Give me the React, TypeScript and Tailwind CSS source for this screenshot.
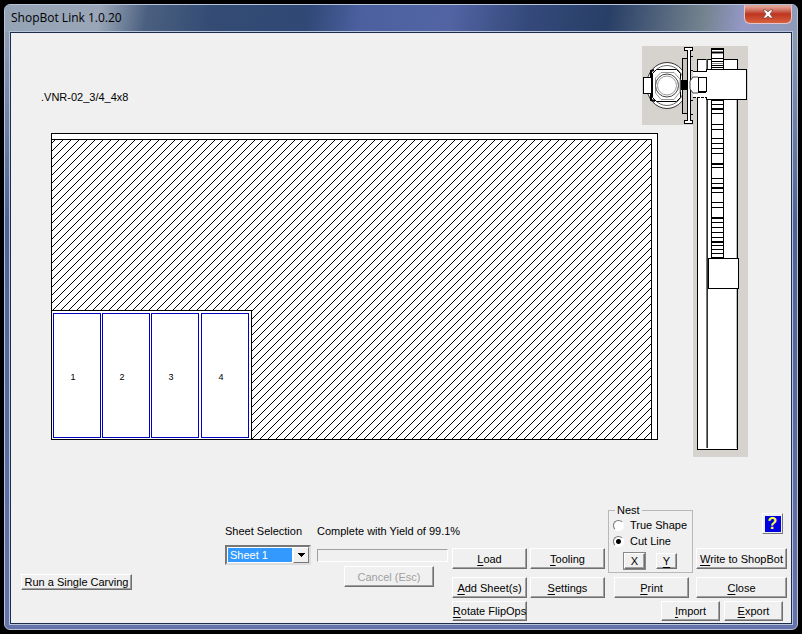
import React from "react";

type PushButtonProps = {
  label: string;
  hotkey?: string;
  className?: string;
  disabled?: boolean;
};

// Underlines the first occurrence of the hotkey letter
function PushButton({ label, hotkey, className = "", disabled }: PushButtonProps) {
  const at = hotkey ? label.indexOf(hotkey) : -1;

  return (
    <button
      disabled={disabled}
      className={`flex items-center justify-center whitespace-nowrap border border-t-white border-l-white border-r-[#6f6f6f] border-b-[#6f6f6f] bg-[#f0f0f0] shadow-[inset_-1px_-1px_0_#a0a0a0] disabled:text-[#a0a0a0] ${className}`}
    >
      {at < 0 ? (
        label
      ) : (
        <span>
          {label.slice(0, at)}
          <span className="underline underline-offset-2">{hotkey}</span>
          {label.slice(at + 1)}
        </span>
      )}
    </button>
  );
}

const parts = [
  { id: 1, x: 2 },
  { id: 2, x: 51 },
  { id: 3, x: 100 },
  { id: 4, x: 150 },
];

function SheetPreview() {
  return (
    <svg viewBox="0 0 607 307" className="block w-full" shapeRendering="crispEdges">
      <defs>
        <pattern id="waste" width="8" height="8" patternUnits="userSpaceOnUse">
          <rect width="8" height="8" fill="#fff" />
          {[0, 1, 2, 3, 4, 5, 6, 7].map((y) => (
            <rect key={y} x={(18 - y) % 8} y={y} width="1" height="1" fill="#000" />
          ))}
        </pattern>
      </defs>
      <rect x="0.5" y="0.5" width="606" height="306" fill="#fff" stroke="#000" />
      <rect x="0.5" y="6.5" width="600" height="300" fill="url(#waste)" stroke="#000" />
      <rect x="0.5" y="177.5" width="200" height="129" fill="#fff" stroke="#000" />
      {parts.map((part) => (
        <g key={part.id}>
          <rect x={part.x + 0.5} y="180.5" width="47" height="124" fill="#fff" stroke="#0000c0" />
          <text
            x={part.x + 20}
            y="247"
            textAnchor="middle"
            className="fill-black font-['Liberation_Sans'] text-[9px]"
          >
            {part.id}
          </text>
        </g>
      ))}
    </svg>
  );
}

// [y, thickness] of the rack teeth below the carriage
const teeth = [
  [54, 1], [58, 1], [62, 2], [67, 1], [78, 1], [83, 1], [92, 1], [97, 1], [102, 1], [107, 1],
  [117, 2], [121, 1], [132, 1], [137, 1], [141, 2], [146, 1], [156, 1], [161, 1], [171, 2],
  [176, 1], [181, 1], [186, 1], [191, 1], [195, 2], [199, 1], [203, 1], [207, 1], [211, 1],
];

function Gantry() {
  return (
    <svg width="106" height="411" viewBox="0 0 106 411" className="block shrink-0" fill="#fff" stroke="#000">
      <path d="M0 0H106V411H51V79H0Z" fill="#d6d3ce" stroke="none" />

      {/* rail */}
      <g shapeRendering="crispEdges">
        <path d="M55.500 13.500H95.500V403.500H55.500Z" />
        <path d="M64.500 13V402" stroke="#777" />
        <path d="M65.500 13V402" stroke="#333" />
        <path d="M94.500 53V402" stroke="#bbb" />
        <path d="M69.500 2.500H81.500V212.500H69.500Z" />
        <path d="M70 3.500H81M70 6.500H81M70 12.500H81M70 15.500H81M70 19.500H81M70 21.500H81" />
        <path d="M70 5.500H81M70 7.500H81M70 17.500H81" stroke="#888" />
        {teeth.map(([y, height]) => (
          <rect key={y} x="70" y={y} width="11" height={height} fill="#000" stroke="none" />
        ))}
        <path d="M64.500 23.500H104.500V53.500H64.500Z" />
        <path d="M66.500 212.500H96.500V242.500H66.500Z" />
      </g>

      {/* spindle */}
      <ellipse cx="25" cy="39.500" rx="20.500" ry="23" stroke="#333" />
      <ellipse cx="25" cy="39.500" rx="17.500" ry="20" stroke="#666" />
      <path d="M1.500 31.500H9.500V47.500H1.500Z" shapeRendering="crispEdges" />
      <path d="M9 48V54L13 55M9 31V25L12 24" fill="none" strokeWidth="2" />
      <path d="M14.500 23.500H34.500L38.500 27.500V51.500L34.500 55.500H14.500L10.500 51.500V27.500Z" />
      <path d="M19 26.500H32L38 33V46L32 53.500H19L13.500 47V32Z" stroke="#999" />
      <circle cx="25" cy="39.500" r="11.500" stroke="#444" />
      <circle cx="25" cy="39.500" r="9.500" stroke="#999" />

      {/* mount */}
      <g shapeRendering="crispEdges">
        <path d="M40.500 12.500H45.500V67.500H40.500Z" fill="#c8c5c0" />
        <path d="M42.500 1.500H50.500V4.500H48.500V74.500H50.500V77.500H42.500V74.500H45.500V4.500H42.500Z" />
        <path d="M48 10.500H51M48 24.500H51M48 54.500H51M48 68.500H51" />
        <path d="M51 25.500H64.500V31.500H51Z" stroke="none" />
        <path d="M51 45.500H64.500V51.500H51Z" stroke="none" />
        <path d="M51 25.500H64M51 31.500H64M51 46.500H64" />
        <path d="M56.500 31.500H64.500V45.500H56.500Z" />
        <path d="M39 34H46V44H39Z" fill="#000" stroke="none" />
        <path d="M51 51.500H65" strokeDasharray="3 1" />
      </g>
      <path d="M56 31L51 31L48 35V43L51 47H56" stroke="#444" />
    </svg>
  );
}

export default function App() {
  return (
    <div className="min-h-screen bg-black p-1 font-['Liberation_Sans',sans-serif] text-[11px] leading-4 text-black">
      <div className="flex min-h-[626px] flex-col rounded-md border border-[#b5c4da] bg-linear-to-b from-[#8d9ab0] from-5% via-[#4f6296] via-35% to-[#6673aa] px-[5px] pb-[5px]">
        {/* TITLE BAR */}
        <header className="-mx-[5px] flex h-[27px] items-start justify-between rounded-t-md bg-[linear-gradient(100deg,#94a3b5_0%,#9aa6b8_12%,#4b6080_18%,#344c74_26%,#2f4875_38%,#4c60a0_45%,#5264a4_56%,#34497a_66%,#283f66_76%,#74838f_88%,#9498c6_93%,#8f9bb8_100%)] pl-[6px]">
          <h1 className="pt-[2px] font-['Open_Sans',sans-serif] text-[12px] leading-[22px]">
            ShopBot Link 1.0.20
          </h1>
          <button
            aria-label="Close window"
            className="mr-[5px] flex h-[19px] w-12 items-center justify-center rounded-b-md border border-t-0 border-[#e5c5c5] bg-linear-to-b from-[#e0a093] from-10% via-[#bd3420] via-50% to-[#d8603f]"
          >
            <svg width="12" height="10" viewBox="0 0 12 10">
              <path d="M1 1H4L6 3L8 1H11L8 5L11 9H8L6 7L4 9H1L4 5Z" fill="#fff" stroke="#5a3434" strokeWidth="0.600" />
            </svg>
          </button>
        </header>

        <main className="flex flex-1 flex-col border border-[#1d2b4c] bg-[#f0f0f0] outline outline-[#b5c4da]">
          <section className="flex items-start pt-[13px] pr-[43px] pl-10">
            <div className="min-w-0 flex-1">
              <p className="-ml-[10px] mt-[43px] mb-[28px]">.VNR-02_3/4_4x8</p>
              <SheetPreview />
            </div>
            <div className="relative -ml-4">
              <Gantry />
            </div>
          </section>

          {/* CONTROLS */}
          <section className="mt-auto flex items-start pr-[4px] pb-[2px] pl-[10px]">
            <PushButton label="Run a Single Carving" className="mt-[65px] h-4 w-[111px]" />

            <div className="ml-auto flex gap-[6px] pt-[14px]">
              <div className="w-[86px]">
                <label htmlFor="sheet" className="block">
                  Sheet Selection
                </label>
                <div className="relative mt-[6px] border-2 border-t-[#777] border-r-[#ddd] border-b-[#ddd] border-l-[#777] bg-white">
                  <select
                    id="sheet"
                    className="block h-4 w-[66px] appearance-none border border-white bg-[#3399ff] pl-[2px] leading-[14px] text-white outline-none"
                  >
                    <option>Sheet 1</option>
                  </select>
                  <span className="pointer-events-none absolute top-0 right-0 flex h-4 w-4 items-center justify-center border border-t-white border-r-[#777] border-b-[#777] border-l-white bg-[#f0f0f0]">
                    <svg width="9" height="5" viewBox="0 0 9 5" shapeRendering="crispEdges">
                      <path d="M1 0H8L4.500 4Z" />
                    </svg>
                  </span>
                </div>
              </div>
              <div className="w-[131px]">
                <p className="whitespace-nowrap">Complete with Yield of 99.1%</p>
                <div
                  role="progressbar"
                  aria-label="Nesting progress"
                  className="mt-[10px] h-[13px] border border-t-[#a0a0a0] border-r-white border-b-white border-l-[#a0a0a0]"
                />
                <PushButton label="Cancel (Esc)" disabled className="mt-1 ml-[27px] h-[21px] w-[90px]" />
              </div>
            </div>

            <div className="ml-[4px] grid grid-cols-[75px_75px] gap-x-[3px] pt-[39px]">
              <PushButton label="Load" hotkey="L" className="h-[21px]" />
              <PushButton label="Tooling" hotkey="T" className="h-[21px]" />
              <PushButton label="Add Sheet(s)" hotkey="A" className="mt-2 h-[21px]" />
              <PushButton label="Settings" hotkey="S" className="mt-2 h-[21px]" />
              <PushButton label="Rotate FlipOps" hotkey="R" className="mt-[3px] h-5" />
            </div>

            <div className="ml-[3px]">
              <div className="flex items-start gap-[3px]">
                <fieldset className="-mt-[6px] h-[70px] w-[85px] border border-[#b8b8b8] px-1">
                  <legend className="ml-[2px] px-[2px] leading-[14px]">Nest</legend>
                  <label className="flex h-4 items-center gap-[6px] whitespace-nowrap">
                    <input
                      type="radio"
                      name="nest"
                      className="size-[11px] appearance-none rounded-full border border-t-[#777] border-r-white border-b-white border-l-[#777] bg-white"
                    />
                    True Shape
                  </label>
                  <label className="flex h-4 items-center gap-[6px] whitespace-nowrap">
                    <input
                      type="radio"
                      name="nest"
                      defaultChecked
                      className="size-[11px] appearance-none rounded-full border border-t-[#777] border-r-white border-b-white border-l-[#777] bg-white checked:bg-[radial-gradient(#000_2px,#fff_3px)]"
                    />
                    Cut Line
                  </label>
                  <div className="mt-1 ml-[11px] flex gap-[11px]">
                    <PushButton label="X" className="h-4 w-[21px] outline outline-[#888]" />
                    <PushButton label="Y" hotkey="Y" className="h-4 w-[21px]" />
                  </div>
                </fieldset>
                <div className="flex w-[91px] flex-col">
                  <button
                    aria-label="Help"
                    className="mt-[4px] mr-[4px] flex size-[21px] items-center justify-center self-end border border-t-white border-r-[#777] border-b-[#777] border-l-white bg-[#f0f0f0]"
                  >
                    <span className="flex size-4 items-center justify-center bg-[#0000e0] text-[16px] leading-4 font-bold text-[#ffff40]">
                      ?
                    </span>
                  </button>
                  <PushButton label="Write to ShopBot" hotkey="W" className="mt-[14px] h-[21px]" />
                </div>
              </div>
              <div className="mt-1 flex justify-between pl-[6px]">
                <PushButton label="Print" hotkey="P" className="h-[21px] w-[75px]" />
                <PushButton label="Close" hotkey="C" className="h-[21px] w-[91px]" />
              </div>
              <div className="mt-[3px] flex justify-end gap-1 pr-1">
                <PushButton label="Import" hotkey="I" className="h-5 w-[59px]" />
                <PushButton label="Export" hotkey="E" className="h-5 w-[59px]" />
              </div>
            </div>
          </section>
        </main>
      </div>
    </div>
  );
}
